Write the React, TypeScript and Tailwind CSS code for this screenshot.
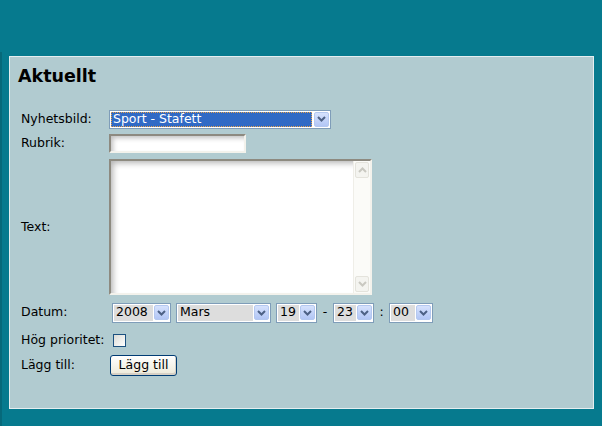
import React from 'react';

const font = { fontFamily: '"DejaVu Sans", Verdana, sans-serif' };

const Chevron = ({ up = false, color = '#4d6185' }: { up?: boolean; color?: string }) => (
  <svg width="9" height="6" viewBox="0 0 9 6">
    <path d={up ? 'M1 5l3.5-3.5L8 5' : 'M1 1l3.5 3.5L8 1'} fill="none" stroke={color} strokeWidth="2" />
  </svg>
);

const DropButton = () => (
  <span className="flex h-[15px] w-[15px] shrink-0 items-center justify-center rounded-[2px] border border-[#b4c8f0] bg-gradient-to-b from-[#d6e2fd] to-[#b2c6f5]">
    <Chevron />
  </span>
);

interface SelectProps {
  value: string;
  className: string;
}

// small grey selects in the date row
const DateSelect = ({ value, className }: SelectProps) => (
  <div className={`flex h-[20px] items-center gap-px border border-[#7f9db9] bg-white p-px ${className}`}>
    <span className="flex h-full flex-1 items-center bg-[#dddddd] pl-[2px] leading-none text-black">{value}</span>
    <DropButton />
  </div>
);

const Row = ({ label, className, children }: { label: string; className: string; children: React.ReactNode }) => (
  <div className={`flex items-center ${className}`}>
    <span className="w-[88px] shrink-0 whitespace-nowrap">{label}</span>
    {children}
  </div>
);

const App = () => {
  return (
    <div className="flex h-[426px] w-[602px] overflow-hidden bg-[#067a8e] text-[12.5px] text-black" style={font}>
      <div className="mt-[52px] w-[2px] bg-[#06697a]" />
      <div className="ml-[7px] mt-[56px]">
        <div className="h-[353px] w-[585px] border border-[#e4eef0] bg-[#b1cbd0] pl-[8px] pt-[8px]">
          <h1 className="text-[17.5px] font-bold leading-[22px]">Aktuellt</h1>

          <div className="ml-[3px] mt-[21px] flex flex-col">
            <Row label="Nyhetsbild:" className="h-[22px]">
              <div className="flex h-[19px] w-[222px] items-center gap-[2px] border border-[#7f9db9] bg-white p-px">
                <span className="flex h-full flex-1 items-center bg-[#316ac5] pl-[2px] leading-none text-white outline-1 outline-dotted outline-[#e8a24a] -outline-offset-1">
                  Sport - Stafett
                </span>
                <DropButton />
              </div>
            </Row>

            <Row label="Rubrik:" className="h-[27px]">
              <input
                type="text"
                className="h-[19px] w-[137px] border-2 border-b-[#f3f2ec] border-l-[#8d8a80] border-r-[#f3f2ec] border-t-[#8d8a80] bg-white shadow-[inset_3px_3px_5px_-1px_rgba(0,0,0,0.25)] outline-none"
              />
            </Row>

            <Row label="Text:" className="h-[140px]">
              <div className="flex h-[136px] w-[263px] border-2 border-b-[#f3f2ec] border-l-[#8d8a80] border-r-[#f3f2ec] border-t-[#8d8a80] bg-white shadow-[inset_4px_4px_6px_-2px_rgba(0,0,0,0.3)]">
                <div className="flex-1" />
                <div className="flex w-[17px] flex-col justify-between border-l border-[#efeee8] bg-[#fbfbf8] p-px">
                  <span className="flex h-[16px] items-center justify-center rounded-[2px] border border-[#e4e3dc] bg-[#f4f4f0]">
                    <Chevron up color="#c9c8c1" />
                  </span>
                  <span className="flex h-[16px] items-center justify-center rounded-[2px] border border-[#e4e3dc] bg-[#f4f4f0]">
                    <Chevron color="#c9c8c1" />
                  </span>
                </div>
              </div>
            </Row>

            <Row label="Datum:" className="h-[31px]">
              <div className="ml-[3px] flex items-center">
                <DateSelect value="2008" className="w-[59px]" />
                <DateSelect value="Mars" className="ml-[5px] w-[95px]" />
                <DateSelect value="19" className="ml-[5px] w-[41px]" />
                <span className="w-[16px] text-center">-</span>
                <DateSelect value="23" className="w-[41px]" />
                <span className="w-[15px] text-center">:</span>
                <DateSelect value="00" className="w-[44px]" />
              </div>
            </Row>

            <Row label="Hög prioritet:" className="h-[24px]">
              <span className="ml-[4px] h-[13px] w-[13px] border border-[#1c5180] bg-gradient-to-br from-[#dcdcd7] to-white" />
            </Row>

            <Row label="Lägg till:" className="h-[26px]">
              <button
                type="button"
                className="ml-px flex h-[21px] w-[67px] items-center justify-center rounded-[3px] border border-[#003c74] bg-gradient-to-b from-white to-[#ece9d8] text-black shadow-[inset_-1px_-2px_0_#d6d0c5]"
              >
                Lägg till
              </button>
            </Row>
          </div>
        </div>
      </div>
    </div>
  );
};

export default App;
